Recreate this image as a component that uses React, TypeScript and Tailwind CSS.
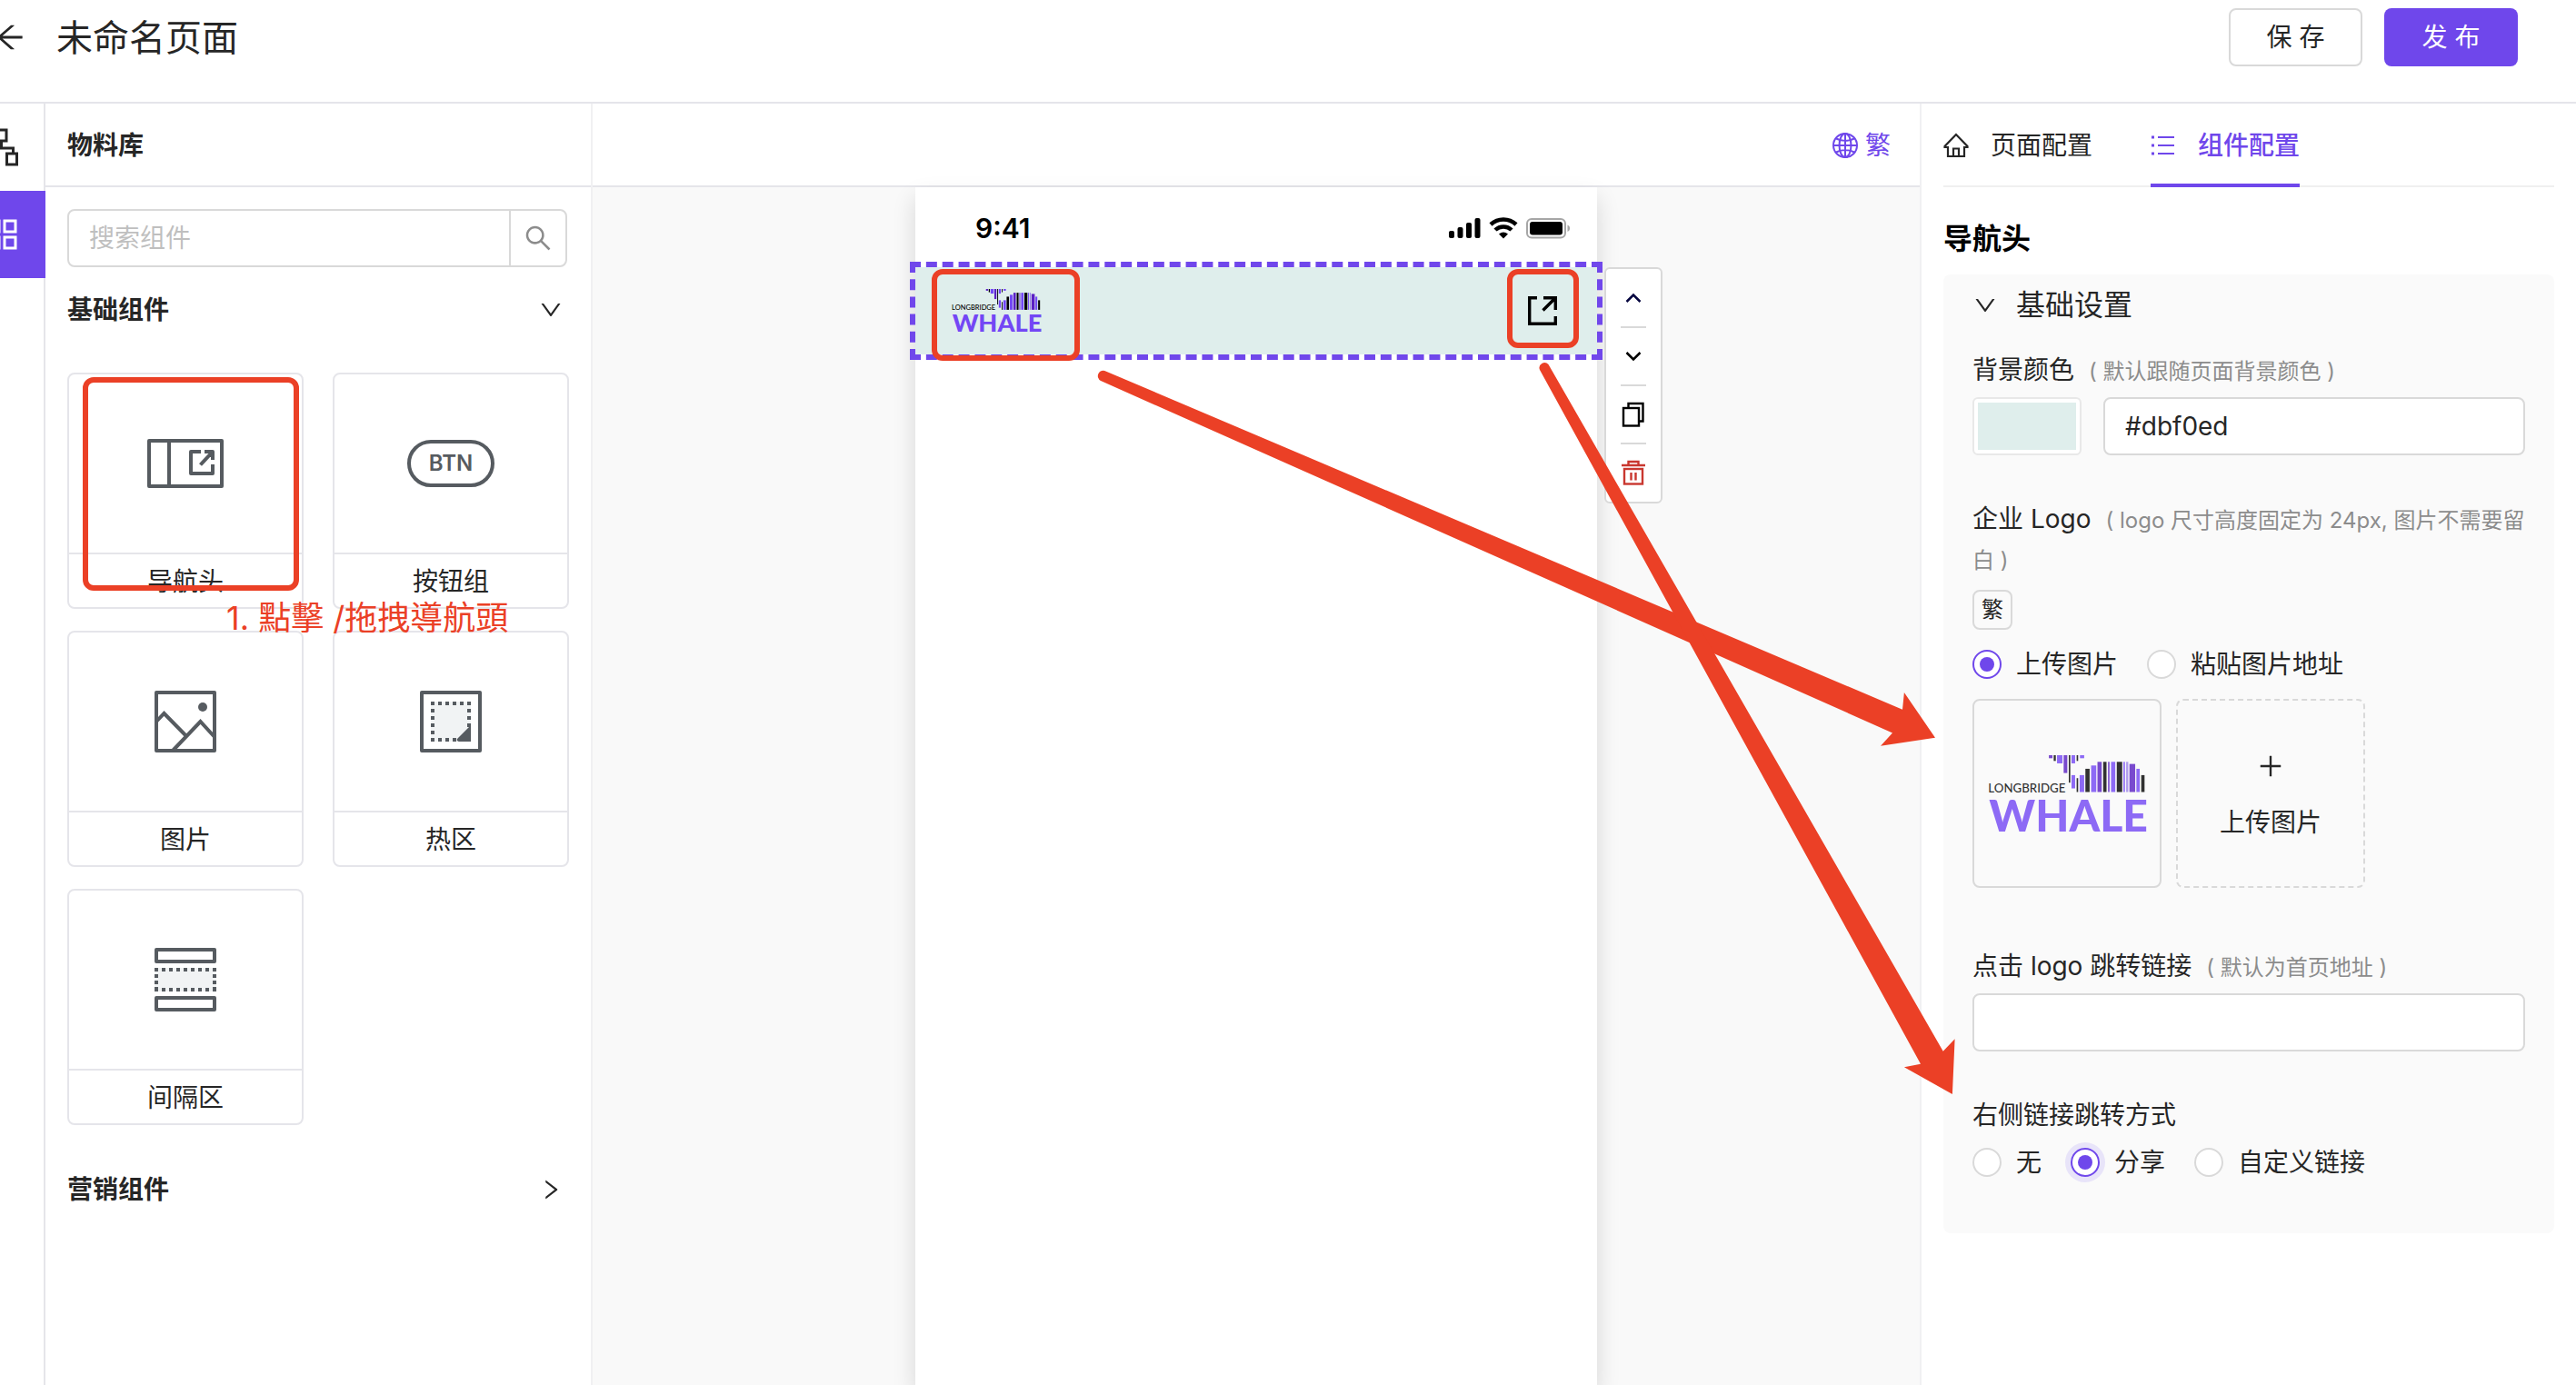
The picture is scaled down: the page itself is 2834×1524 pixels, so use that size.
import type { ReactNode } from "react";
import { AiOutlineArrowLeft, AiOutlineDown, AiOutlinePlus, AiOutlineRight, AiOutlineSearch } from "react-icons/ai";

function SitemapIcon() {
  return (
    <svg className="shrink-0" width="40" height="42" viewBox="-20 0 40 42" fill="none" stroke="#262626" strokeWidth="3">
      <rect x="-4" y="2" width="11" height="12" />
      <path d="M1.500 14v8M-11.500 28v-6h26v6" />
      <rect x="-17" y="28" width="11" height="12" />
      <rect x="7.500" y="28" width="11" height="12" />
    </svg>
  );
}

function GridIcon() {
  return (
    <svg className="shrink-0" width="34" height="34" viewBox="0 0 34 34" fill="none" stroke="#fff" strokeWidth="3">
      <rect x="2" y="2" width="12" height="12" />
      <rect x="20" y="2" width="12" height="12" />
      <rect x="2" y="20" width="12" height="12" />
      <rect x="20" y="20" width="12" height="12" />
    </svg>
  );
}

function NavHeadIcon() {
  return (
    <svg width="84" height="54" viewBox="0 0 84 54" fill="none" stroke="#565b60" strokeWidth="4" strokeLinejoin="round">
      <rect x="2" y="2" width="80" height="50" />
      <path d="M24 2v50" />
      <path d="M59 14H48v24h24V28M63 14h9v9M72 14 58.500 28.500" />
    </svg>
  );
}

function ButtonGroupIcon() {
  return (
    <span className="flex h-[52px] w-24 items-center justify-center rounded-full border-4 border-[#565b60] text-[24px] leading-none font-semibold text-[#565b60]">
      BTN
    </span>
  );
}

function ImageIcon() {
  return (
    <svg width="68" height="68" viewBox="0 0 68 68" fill="none" stroke="#565b60" strokeWidth="4">
      <rect x="2" y="2" width="64" height="64" strokeLinejoin="round" />
      <path d="M2 34 10.500 25 36 51M20 66 50.500 34 67 52" />
      <circle cx="53" cy="18" r="5" fill="#565b60" stroke="none" />
    </svg>
  );
}

function HotZoneIcon() {
  return (
    <svg width="68" height="68" viewBox="0 0 68 68" fill="none" stroke="#565b60" strokeWidth="4">
      <rect x="2" y="2" width="64" height="64" strokeLinejoin="round" />
      <rect x="12" y="12" width="44" height="44" fill="#f1f3f4" stroke="none" />
      <path d="M12 14h44M12 54h44" strokeDasharray="4 4" />
      <path d="M14 12v44M54 12v44" strokeDasharray="4 4" />
      <path d="M56 40v14a2 2 0 0 1-2 2H43c-2 0-3-2-1.500-3.500L54 40c1-1 2-1 2 0z" fill="#565b60" stroke="none" />
    </svg>
  );
}

function SpacerIcon() {
  return (
    <svg width="68" height="70" viewBox="0 0 68 70" fill="none" stroke="#565b60" strokeWidth="4">
      <rect x="2" y="2" width="64" height="13" strokeLinejoin="round" />
      <rect x="0" y="22" width="68" height="26" fill="#f1f3f4" stroke="none" />
      <path d="M0 24h68M0 46h68" strokeDasharray="4 4" />
      <path d="M2 22v26M66 22v26" strokeDasharray="4 3" />
      <rect x="2" y="55" width="64" height="13" strokeLinejoin="round" />
    </svg>
  );
}

function GlobeIcon() {
  return (
    <svg width="28" height="28" viewBox="0 0 28 28" fill="none" stroke="currentColor" strokeWidth="2">
      <circle cx="14" cy="14" r="13" />
      <ellipse cx="14" cy="14" rx="6.500" ry="13" />
      <path d="M14 1v26M1 14h26M4 6.500c6 3 14 3 20 0M4 21.500c6-3 14-3 20 0" />
    </svg>
  );
}

function HomeIcon() {
  return (
    <svg width="28" height="28" viewBox="0 0 28 28" fill="none" stroke="currentColor" strokeWidth="2.200">
      <path d="M14 2 1.500 15v1H5v10h18V16h3.500v-1zM11 26v-8.500h6V26" />
    </svg>
  );
}

function ListIcon() {
  return (
    <svg width="28" height="28" viewBox="0 0 28 28" fill="none" stroke="currentColor" strokeWidth="2.200">
      <path d="M8 5h18M8 14h18M8 23h18" />
      <path d="M1 5h3M1 14h3M1 23h3" strokeWidth="3" />
    </svg>
  );
}

function ShareIcon() {
  return (
    <svg width="32" height="32" viewBox="0 0 32 32" fill="none" stroke="#000" strokeWidth="3.400">
      <path d="M10 1.700H1.700v28.600h28.600V22M17 1.700h13.300V15M30 2 16.500 15.500" />
    </svg>
  );
}

const P = "#7347f5";
const D = "#5a1fc4";
const K = "#000000";
const L = "#9d86ea";

// x, top, right, bottom, colour
const LOGO_BARS: [number, number, number, number, string][] = [
  [198, 0, 210, 10, D], [214, 0, 221, 19, K], [225, 0, 243, 27, P], [247, 0, 259, 59, D],
  [264, 0, 269, 91, K], [273, 0, 285, 27, P], [290, 0, 295, 19, K], [301, 0, 315, 10, P],
  [273, 66, 285, 110, P], [290, 76, 295, 122, K], [300, 66, 315, 122, P], [319, 45, 333, 122, K],
  [338, 34, 355, 122, P], [359, 22, 373, 122, D], [378, 22, 389, 122, K], [394, 22, 399, 122, D],
  [404, 22, 418, 122, P], [423, 22, 441, 122, K], [445, 22, 450, 122, P], [454, 22, 461, 122, L],
  [465, 29, 484, 122, D], [488, 45, 499, 122, P], [504, 66, 515, 122, K],
];

function WhaleLogo({ className }: { className: string }) {
  return (
    <svg className={className} viewBox="0 0 516 256" role="img" aria-label="Longbridge Whale">
      {LOGO_BARS.map(([x, y, r, b, fill], i) => (
        <rect key={i} x={x} y={y} width={r - x} height={b - y} fill={fill} />
      ))}
      <text x="-3" y="122" fontFamily="Lato" fontSize="40" fontWeight="500" fill="#000">LONGBRIDGE</text>
      <text x="0" y="252" fontFamily="Lato" fontSize="145" fontWeight="900" fill={P}>WHALE</text>
    </svg>
  );
}

const COMPONENTS: { name: string; icon: ReactNode; marked?: boolean }[] = [
  { name: "导航头", icon: <NavHeadIcon />, marked: true },
  { name: "按钮组", icon: <ButtonGroupIcon /> },
  { name: "图片", icon: <ImageIcon /> },
  { name: "热区", icon: <HotZoneIcon /> },
  { name: "间隔区", icon: <SpacerIcon /> },
];

function ComponentCard({ name, icon, marked }: { name: string; icon: ReactNode; marked?: boolean }) {
  return (
    <button type="button" className="relative flex h-[260px] flex-col rounded-lg border-2 border-[#e5e5ea] bg-white">
      <span className="flex w-full flex-1 items-center justify-center border-b-2 border-[#e5e5ea]">{icon}</span>
      <span className="flex h-[58px] w-full items-center justify-center pt-0.5">{name}</span>
      {marked && (
        <>
          <span className="absolute top-[3px] right-[3px] bottom-[18px] left-[15px] rounded-xl border-[6px] border-[#eb4026]" />
          <span className="absolute top-[240px] left-[173px] z-10 text-[36px] leading-[56px] whitespace-nowrap text-[#eb4026]">
            1. 點擊 /拖拽導航頭
          </span>
        </>
      )}
    </button>
  );
}

function Library() {
  return (
    <aside className="w-[602px] shrink-0 border-r-2 border-[#f0f0f2]">
      <h2 className="flex h-[92px] items-center border-b-2 border-[#e5e5ea] px-6 pt-0.5 font-bold">物料库</h2>
      <div className="px-6 pt-6">
        <form className="mr-0.5 flex h-16 overflow-hidden rounded-lg border-2 border-[#d9d9d9]">
          <input aria-label="搜索组件" placeholder="搜索组件" className="min-w-0 flex-1 px-[22px] outline-none placeholder:text-[#bfbfbf]" />
          <button type="button" aria-label="搜索" className="flex w-[62px] items-center justify-center border-l-2 border-[#d9d9d9] text-[#8c8c8c]">
            <AiOutlineSearch size={34} />
          </button>
        </form>
        <button type="button" className="mt-6 flex h-11 w-full items-center justify-between pt-0.5 pr-1.5 font-bold">
          基础组件
          <AiOutlineDown size={28} />
        </button>
        <div className="mt-12 grid grid-cols-2 gap-x-8 gap-y-6">
          {COMPONENTS.map((c) => (
            <ComponentCard key={c.name} {...c} />
          ))}
        </div>
        <button type="button" className="mt-12 flex h-11 w-full items-center justify-between pt-0.5 pr-1.5 font-bold">
          营销组件
          <AiOutlineRight size={28} />
        </button>
      </div>
    </aside>
  );
}

function StatusBar() {
  return (
    <div className="flex h-[88px] items-center justify-between pt-0.5 pr-7 pl-[66px]">
      <span className="text-[30px] font-semibold text-black">9:41</span>
      <svg width="136" height="24" viewBox="0 0 136 24">
        <rect x="1" y="15" width="6" height="8" rx="2" />
        <rect x="10.500" y="11" width="6" height="12" rx="2" />
        <rect x="20" y="6" width="6" height="17" rx="2" />
        <rect x="29.500" y="1" width="6" height="22" rx="2" />
        <path d="M47 8a20.500 20.500 0 0 1 28 0" fill="none" stroke="#000" strokeWidth="4.500" />
        <path d="M52 14a13 13 0 0 1 18 0" fill="none" stroke="#000" strokeWidth="4.500" />
        <path d="M56 18.500a8 8 0 0 1 10 0l-5 5z" />
        <rect x="87" y="2" width="42" height="20.500" rx="5" fill="none" stroke="#a6a6a6" strokeWidth="2" />
        <rect x="90" y="5" width="36" height="14.500" rx="3" />
        <path d="M131.500 8.500c3.500 1.500 3.500 6 0 7.500z" fill="#a6a6a6" />
      </svg>
    </div>
  );
}

function ToolBar() {
  const cell = "flex h-16 w-full items-center justify-center";
  const rule = "h-0.5 w-7 bg-[#d9d9d9] -my-px";
  return (
    <div className="absolute top-1.5 left-full ml-2 flex w-16 flex-col items-center rounded-md border-2 border-[#d9d9d9] bg-white">
      <button type="button" aria-label="上移" className={cell}>
        <svg width="18" height="12" viewBox="0 0 18 12" fill="none" stroke="#06063f" strokeWidth="2.500"><path d="M1.500 10 9 2.500 16.500 10" /></svg>
      </button>
      <span className={rule} />
      <button type="button" aria-label="下移" className={cell}>
        <svg width="18" height="12" viewBox="0 0 18 12" fill="none" stroke="#000" strokeWidth="2.500"><path d="M1.500 2 9 9.500 16.500 2" /></svg>
      </button>
      <span className={rule} />
      <button type="button" aria-label="复制" className={cell}>
        <svg width="26" height="28" viewBox="0 0 26 28" fill="none" stroke="#000" strokeWidth="2.400">
          <rect x="2" y="7" width="17" height="19.500" />
          <path d="M7.500 7V2h16v19.500H19" />
        </svg>
      </button>
      <span className={rule} />
      <button type="button" aria-label="删除" className={cell}>
        <svg width="26" height="28" viewBox="0 0 26 28" fill="none" stroke="#c9372f" strokeWidth="2.400">
          <path d="M0 6h26M7.500 6V2h11v4" />
          <rect x="3" y="10" width="20" height="16.500" />
          <path d="M10.500 14v8.500M15.500 14v8.500" />
        </svg>
      </button>
    </div>
  );
}

function Canvas() {
  return (
    <main className="flex min-w-0 flex-1 flex-col">
      <div className="flex h-[92px] items-center justify-end border-b-2 border-[#e5e5ea] pt-0.5 pr-8">
        <button type="button" className="flex items-center gap-2 text-[#6f47eb]">
          <GlobeIcon />繁
        </button>
      </div>
      <div className="flex flex-1 justify-center bg-[#f9f9f9]">
        <div className="w-[750px] bg-white shadow-[0_12px_24px_rgba(0,0,0,0.14)]">
          <StatusBar />
          <div className="relative">
            <div className="-mx-1.5 -my-1.5 flex h-[108px] items-center justify-between border-[6px] border-dashed border-[#7047eb] bg-[#dfeeec] bg-clip-padding pr-11 pl-10">
              <WhaleLogo className="h-12 w-[98px] overflow-visible" />
              <ShareIcon />
            </div>
            <span className="absolute top-2 left-[18px] h-[101px] w-[163px] rounded-xl border-[6px] border-[#eb4026]" />
            <span className="absolute top-2 right-5 h-[87px] w-[79px] rounded-xl border-[6px] border-[#eb4026]" />
            <ToolBar />
          </div>
        </div>
      </div>
    </main>
  );
}

function Radio({ name, label, checked, focused }: { name: string; label: string; checked?: boolean; focused?: boolean }) {
  return (
    <label className="flex items-center gap-4">
      <input
        type="radio"
        name={name}
        defaultChecked={checked}
        className={
          "grid size-8 appearance-none place-content-center rounded-full border-2 border-[#d9d9d9] bg-white checked:border-[#6f47eb] checked:before:size-4 checked:before:rounded-full checked:before:bg-[#6f47eb]" +
          (focused ? " shadow-[0_0_0_6px_#e8e4f9]" : "")
        }
      />
      {label}
    </label>
  );
}

function Hint({ children }: { children: ReactNode }) {
  return <span className="ml-4 text-[24px] leading-6 text-[#8c8c8c]">{children}</span>;
}

function Settings() {
  return (
    <aside className="w-[722px] shrink-0 border-l-2 border-[#f0f0f2] pr-6 pl-6">
      <nav className="flex h-[92px] gap-16 border-b-2 border-[#f0f0f0]">
        <button type="button" className="flex items-center gap-6 pt-0.5">
          <HomeIcon />页面配置
        </button>
        <button type="button" className="-mb-0.5 flex items-center gap-6 border-b-4 border-[#6f47eb] pt-1 font-medium text-[#6f47eb]">
          <ListIcon />组件配置
        </button>
      </nav>
      <h2 className="mt-8 text-[32px] leading-[50px] font-bold text-black">导航头</h2>
      <section className="mt-3.5 rounded-lg bg-[#fafafa] px-8 pb-14">
        <button type="button" className="flex h-[68px] items-center gap-5 text-[32px]">
          <AiOutlineDown size={28} />
          基础设置
        </button>
        <div className="mt-[15px] leading-11">
          <label htmlFor="bg-color">背景颜色</label>
          <Hint>( 默认跟随页面背景颜色 )</Hint>
        </div>
        <div className="mt-2 flex gap-6">
          <button type="button" aria-label="选择颜色" className="h-16 w-[120px] rounded-md border-2 border-[#e8e8e8] bg-white p-1">
            <span className="block h-full bg-[#dfeeec]" />
          </button>
          <input id="bg-color" defaultValue="#dbf0ed" className="h-16 min-w-0 flex-1 rounded-lg border-2 border-[#d9d9d9] bg-white px-[22px]" />
        </div>
        <div className="mt-12 leading-11">
          企业 Logo
          <Hint>( logo 尺寸高度固定为 24px, 图片不需要留白 )</Hint>
        </div>
        <button type="button" className="mt-3 flex size-11 items-center justify-center rounded-lg border-2 border-[#d9d9d9] text-[24px]">
          繁
        </button>
        <div className="mt-4 flex h-11 items-center gap-8">
          <Radio name="source" label="上传图片" checked />
          <Radio name="source" label="粘贴图片地址" />
        </div>
        <div className="mt-4 flex gap-4">
          <div className="flex size-52 items-center justify-center rounded-lg border-2 border-[#d9d9d9]">
            <WhaleLogo className="h-[85px] w-[172px] overflow-visible opacity-80" />
          </div>
          <button type="button" className="flex size-52 flex-col items-center justify-center gap-6 rounded-lg border-2 border-dashed border-[#d9d9d9] pt-2">
            <AiOutlinePlus size={32} />
            <span className="leading-11">上传图片</span>
          </button>
        </div>
        <div className="mt-16 leading-11">
          <label htmlFor="logo-link">点击 logo 跳转链接</label>
          <Hint>( 默认为首页地址 )</Hint>
        </div>
        <input id="logo-link" className="mt-2 block h-16 w-full rounded-lg border-2 border-[#d9d9d9] bg-white px-[22px]" />
        <div className="mt-12 leading-11">右侧链接跳转方式</div>
        <div className="mt-2 flex h-11 items-center gap-8">
          <Radio name="jump" label="无" />
          <Radio name="jump" label="分享" checked focused />
          <Radio name="jump" label="自定义链接" />
        </div>
      </section>
    </aside>
  );
}

// Hand-drawn markers that tie the preview to its settings
function Arrows() {
  return (
    <svg className="pointer-events-none absolute top-[390px] left-[1200px]" width="960" height="830" viewBox="1200 390 960 830" fill="#eb4026">
      <path d="M1216.500 408.500 2093 780.700 2094.900 762 2129 811.700 2069 820.800 2082 806.400 1211 419a5.700 5.700 0 0 1 5.500-10.500z" />
      <path d="M1703.500 401 2137.700 1156.700 2150.600 1143.300 2147.900 1204 2094.900 1174.300 2113 1170.700 1694 407a5.700 5.700 0 0 1 9.500-6z" />
    </svg>
  );
}

export default function App() {
  return (
    <div className="relative flex min-h-screen flex-col overflow-hidden bg-white font-[Inter,'Noto_Sans_CJK_SC',sans-serif] text-[28px] leading-11 text-[#262626]">
      <header className="flex h-[114px] items-start border-b-2 border-[#e5e5ea] pt-[9px] pr-16">
        <button type="button" aria-label="返回" className="-ml-2 flex h-16 items-center">
          <AiOutlineArrowLeft size={38} />
        </button>
        <h1 className="ml-8 flex h-16 flex-1 items-center pt-0.5 text-[40px]">未命名页面</h1>
        <div className="flex gap-6">
          <button type="button" className="h-16 w-[147px] rounded-lg border-2 border-[#d9d9d9] bg-white">保 存</button>
          <button type="button" className="h-16 w-[147px] rounded-lg bg-[#6f47eb] text-white">发 布</button>
        </div>
      </header>
      <div className="flex flex-1">
        <nav className="flex w-[50px] shrink-0 flex-col">
          <button type="button" aria-label="页面结构" className="flex h-24 justify-end overflow-hidden border-r-2 border-[#e5e5ea] pt-[27px] pr-7">
            <SitemapIcon />
          </button>
          <button type="button" aria-label="物料库" className="flex h-24 items-center justify-end overflow-hidden bg-[#6f47eb] pr-[31px]">
            <GridIcon />
          </button>
          <div className="flex-1 border-r-2 border-[#e5e5ea]" />
        </nav>
        <Library />
        <Canvas />
        <Settings />
      </div>
      <Arrows />
    </div>
  );
}
